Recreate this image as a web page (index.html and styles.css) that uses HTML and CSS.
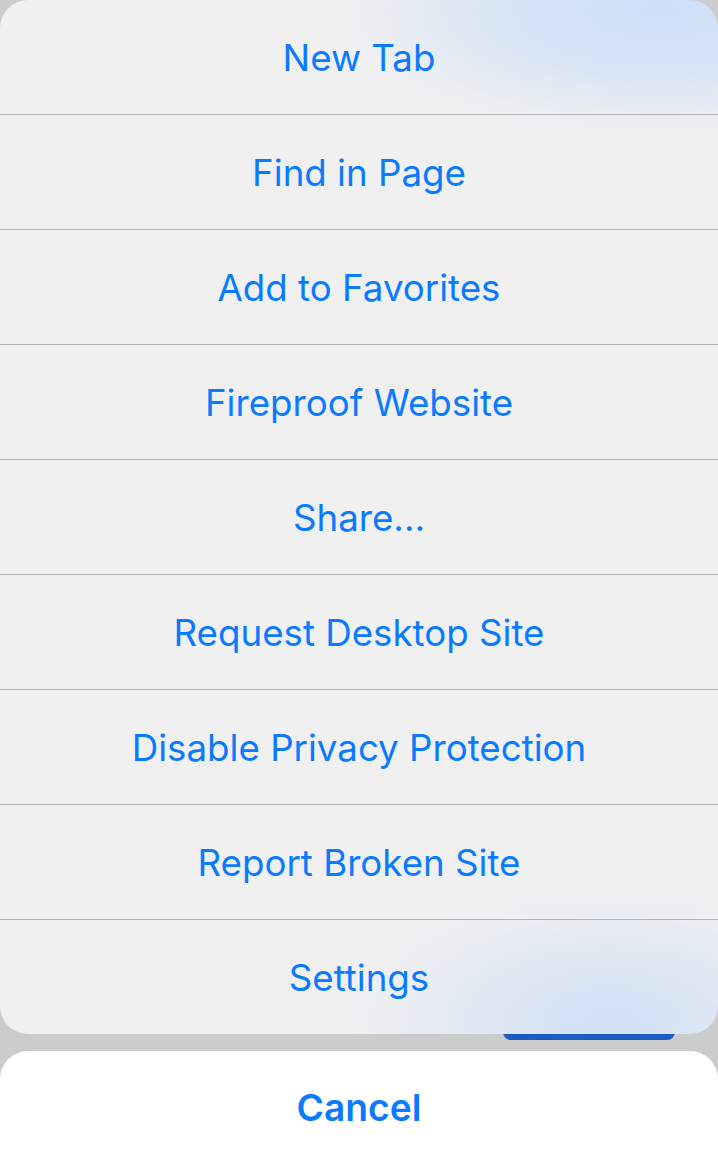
FILE: index.html
```html
<!DOCTYPE html>
<html>
<head>
<meta charset="utf-8">
<link rel="stylesheet" href="styles.css">
</head>
<body>
<div class="screen">
  <div class="backdrop-button"></div>
  <div class="sheet">
    <div class="row">New Tab</div>
    <div class="row">Find in Page</div>
    <div class="row">Add to Favorites</div>
    <div class="row">Fireproof Website</div>
    <div class="row">Share...</div>
    <div class="row">Request Desktop Site</div>
    <div class="row">Disable Privacy Protection</div>
    <div class="row">Report Broken Site</div>
    <div class="row last">Settings</div>
  </div>
  <div class="cancel">Cancel</div>
</div>
</body>
</html>
```
FILE: styles.css
```css
html, body {
  margin: 0;
  padding: 0;
  background: #cccccc;
}
.screen {
  position: relative;
  width: 718px;
  height: 1164px;
  overflow: hidden;
  font-family: Inter, "Noto Sans", sans-serif;
}
.backdrop-button {
  position: absolute;
  left: 503px;
  top: 990px;
  width: 172px;
  height: 50px;
  background: #1a5bc4;
  border-radius: 8px;
}
.sheet {
  position: relative;
  border-radius: 28px;
  overflow: hidden;
  background:
    radial-gradient(ellipse 320px 125px at 660px 10px, rgba(204,223,248,1) 0%, rgba(204,223,248,0.65) 50%, rgba(204,223,248,0) 100%),
    radial-gradient(ellipse 260px 130px at 610px 1020px, rgba(208,224,246,1) 0%, rgba(208,224,246,0.55) 45%, rgba(208,224,246,0) 100%),
    #f0f0f1;
  display: flex;
  flex-direction: column;
}
.row {
  height: 114px;
  border-bottom: 1px solid #b3b3b6;
  display: flex;
  align-items: center;
  justify-content: center;
  color: #0a7aff;
  font-size: 36.7px;
  letter-spacing: 0;
}
.row.last {
  border-bottom: none;
}
.cancel {
  margin-top: 17px;
  height: 140px;
  padding-bottom: 28px;
  box-sizing: border-box;
  background: #ffffff;
  border-radius: 28px;
  display: flex;
  align-items: center;
  justify-content: center;
  color: #0a7aff;
  font-size: 37.2px;
  font-weight: 600;
}
```
